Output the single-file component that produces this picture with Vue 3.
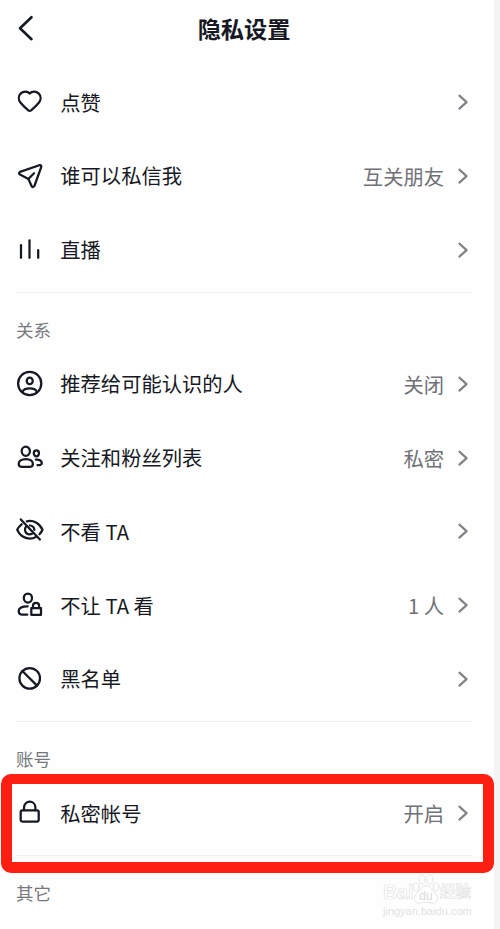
<template>
  <div class="page">
    <div class="panel">
      <header class="header">
        <svg class="back" viewBox="0 0 20 30" width="20" height="30">
          <path d="M15.5 4.2 L4 15.2 L15.5 26.2" />
        </svg>
        <h1>隐私设置</h1>
      </header>

      <section v-for="(group, i) in groups" :key="i" class="group">
        <h2 v-if="group.title">{{ group.title }}</h2>
        <div v-for="item in group.items" :key="item.label" class="row">
          <svg class="icon" viewBox="0 0 28 28" width="28" height="28">
            <path v-for="(d, n) in icons[item.icon]" :key="n" :d="d" />
          </svg>
          <span class="label">{{ item.label }}</span>
          <span class="value">{{ item.value }}</span>
          <svg class="arrow" viewBox="0 0 12 18" width="12" height="18">
            <path d="M2.4 2.6 L9.6 9.1 L2.4 15.6" />
          </svg>
        </div>
      </section>
    </div>

    <div class="highlight"></div>

    <div class="watermark">
      <div class="brand">
        <span class="bai">Bai</span>
        <svg viewBox="0 0 28 30" width="28" height="30">
          <ellipse cx="4" cy="13" rx="3" ry="4" />
          <ellipse cx="10" cy="5.5" rx="3.2" ry="4.5" />
          <ellipse cx="18" cy="5.5" rx="3.2" ry="4.5" />
          <ellipse cx="24" cy="13" rx="3" ry="4" />
          <path d="M14 11.5 C9 11.5 8 17 4.5 19.5 C0 24 3 30.5 9 29 C13 28 15 28 19 29 C25 30.5 28 24 23.5 19.5 C20 17 19 11.5 14 11.5 Z" />
          <text x="14" y="26">du</text>
        </svg>
        <span class="jingyan">经验</span>
      </div>
      <div class="site">jingyan.baidu.com</div>
    </div>
  </div>
</template>

<script setup>
const groups = [
  {
    items: [
      { icon: 'heart', label: '点赞' },
      { icon: 'plane', label: '谁可以私信我', value: '互关朋友' },
      { icon: 'bars', label: '直播' }
    ]
  },
  {
    title: '关系',
    items: [
      { icon: 'user', label: '推荐给可能认识的人', value: '关闭' },
      { icon: 'users', label: '关注和粉丝列表', value: '私密' },
      { icon: 'eyeOff', label: '不看 TA' },
      { icon: 'userLock', label: '不让 TA 看', value: '1 人' },
      { icon: 'ban', label: '黑名单' }
    ]
  },
  {
    title: '账号',
    items: [{ icon: 'lock', label: '私密帐号', value: '开启' }]
  },
  { title: '其它', items: [] }
]

// Stroke paths on a 28x28 grid
const icons = {
  heart: [
    'M13.7 5.5 C11.5 3 7.4 2.9 4.8 5.4 C2.1 8.1 2.3 12 4.6 14.8 C6.8 17.6 9.6 20.1 12.3 22.4 Q13.7 23.5 15.1 22.4 C17.8 20.1 20.6 17.6 22.8 14.8 C25.1 12 25.3 8.1 22.6 5.4 C20 2.9 15.9 3 13.7 5.5 Z'
  ],
  plane: [
    'M4 9.9 L23.3 3.2 Q25.8 2.6 25.2 5.2 L18.4 24 Q17.2 25.9 15.7 24.2 L12.4 17 L4 12.6 Q2.1 11.1 4 9.9 Z',
    'M12.4 17 L18 11.2'
  ],
  bars: ['M5 9.2 V21.8', 'M13.5 4.3 V21.8', 'M22.2 14 V21.8'],
  user: [
    'M13.7 1.9 A11.6 11.6 0 1 1 13.7 25.1 A11.6 11.6 0 1 1 13.7 1.9 Z',
    'M13.7 7.6 A3 3.3 0 1 1 13.7 14.2 A3 3.3 0 1 1 13.7 7.6 Z',
    'M6.5 22 C8 17.2 19.4 17.2 20.9 22'
  ],
  users: [
    'M9.8 2.7 A4.1 4.6 0 1 1 9.8 11.9 A4.1 4.6 0 1 1 9.8 2.7 Z',
    'M9.8 15 C5.3 15 2.7 17.2 2.7 19.9 C2.7 22.3 4.1 22.9 6.3 22.9 H13.3 C15.5 22.9 16.9 22.3 16.9 19.9 C16.9 17.2 14.3 15 9.8 15 Z',
    'M20.4 6.3 A2.6 3 0 1 1 20.4 12.3 A2.6 3 0 1 1 20.4 6.3 Z',
    'M20 15.7 C23.8 15.4 25.8 17.2 25.8 18.9 C25.8 20.7 24.6 21.2 21.5 21.2'
  ],
  eyeOff: [
    'M5.6 7.3 C3.8 8.7 2.2 10.6 1.2 12.8 C3.7 18.4 8.4 21.6 13.8 21.6 C16.1 21.6 18.2 21 20 19.9',
    'M10.8 4.3 C17.5 2.8 23.6 6.3 26.5 12.8 C25.8 14.5 24.8 15.9 23.5 17.2',
    'M9.8 10 C8.3 12 8.9 15 10.8 16.5 C12.3 17.5 14.4 17.6 16 16.8',
    'M13.9 8.5 C16.3 8.6 18.1 10.3 18.4 12.8',
    'M4.8 2.4 L23.9 22.5'
  ],
  userLock: [
    'M11.9 2.5 A4.1 4.6 0 1 1 11.9 11.7 A4.1 4.6 0 1 1 11.9 2.5 Z',
    'M11.6 15.4 C6.1 15.4 2.7 17.1 2.7 20.2 C2.7 22.7 4.2 23.6 6.8 23.6 H11.3',
    'M15.3 17.1 H25 V23.8 H15.3 Z',
    'M17 17 V14.7 C17 11 23.1 11 23.1 14.7 V17'
  ],
  ban: [
    'M13.7 3 A10.3 10.3 0 1 1 13.7 23.6 A10.3 10.3 0 1 1 13.7 3 Z',
    'M6.4 6 L21 20.6'
  ],
  lock: [
    'M6.4 11.4 H21 Q22.7 11.4 22.7 13.1 V20.8 Q22.7 22.5 21 22.5 H6.4 Q4.7 22.5 4.7 20.8 V13.1 Q4.7 11.4 6.4 11.4 Z',
    'M8 11.2 V8.8 C8 0.6 19.4 0.6 19.4 8.8 V11.2'
  ]
}
</script>

<style>
body {
  margin: 0;
  background: #f4f4f5;
}
</style>

<style scoped>
.page {
  position: relative;
  width: 500px;
  height: 929px;
  overflow: hidden;
  background: #f4f4f5;
  font-family: "Noto Sans CJK SC", sans-serif;
  color: #161823;
}

.panel {
  box-sizing: border-box;
  width: 494px;
  height: 929px;
  padding: 0 22px 0 16px;
  background: #fefefe;
}

svg {
  fill: none;
  stroke: #161823;
  stroke-width: 2.25;
  stroke-linecap: round;
  stroke-linejoin: round;
}

.header {
  display: grid;
  grid-template-columns: 20px 1fr 20px;
  align-items: center;
  height: 55px;
  margin-bottom: 10.3px;
}

.back {
  stroke-width: 2.6;
}

h1 {
  margin: 0;
  font-size: 23.2px;
  line-height: 34px;
  font-weight: 700;
  text-align: center;
}

.group + .group {
  margin-top: 5.4px;
  border-top: 1px solid #f0f0f1;
}

h2 {
  margin: 0;
  padding: 24px 0 4.1px;
  font-size: 17.5px;
  line-height: 26px;
  font-weight: 400;
  color: #77787d;
}

.row {
  display: flex;
  align-items: center;
  height: 73.75px;
}

.icon {
  flex: none;
  margin-right: 16.3px;
}

.label {
  padding-bottom: 1px;
  font-size: 20.3px;
  line-height: 30px;
}

.value {
  margin-left: auto;
  margin-right: 13px;
  font-size: 20.3px;
  line-height: 30px;
  color: #707177;
}

.arrow {
  flex: none;
  margin-right: 3px;
  stroke: #808187;
  stroke-width: 2.1;
}

/* Red frame laid over the account row */
.highlight {
  position: absolute;
  left: 1px;
  top: 774px;
  box-sizing: border-box;
  width: 493px;
  height: 99px;
  border: 11px solid #ff1e12;
  border-top-width: 10px;
  border-radius: 10px;
}

.watermark {
  position: absolute;
  left: 383px;
  top: 874px;
  width: 92px;
  font-family: "Liberation Sans", "Noto Sans CJK SC", sans-serif;
  color: #fefefe;
  -webkit-text-stroke: 0.6px #dedede;
}

.brand {
  display: flex;
  align-items: flex-end;
  height: 30px;
}

.brand svg {
  flex: none;
  fill: #fefefe;
  stroke: #dedede;
  stroke-width: 0.8;
}

.brand text {
  font-size: 12px;
  text-anchor: middle;
  fill: #dadada;
  stroke: none;
  -webkit-text-stroke: 0;
}

.bai {
  width: 29px;
  font-size: 19.5px;
  line-height: 24px;
  font-weight: 700;
}

.jingyan {
  font-size: 15.5px;
  line-height: 24px;
  font-weight: 700;
}

.site {
  font-size: 11px;
  line-height: 14px;
  color: #e2e2e2;
  -webkit-text-stroke: 0;
}
</style>
